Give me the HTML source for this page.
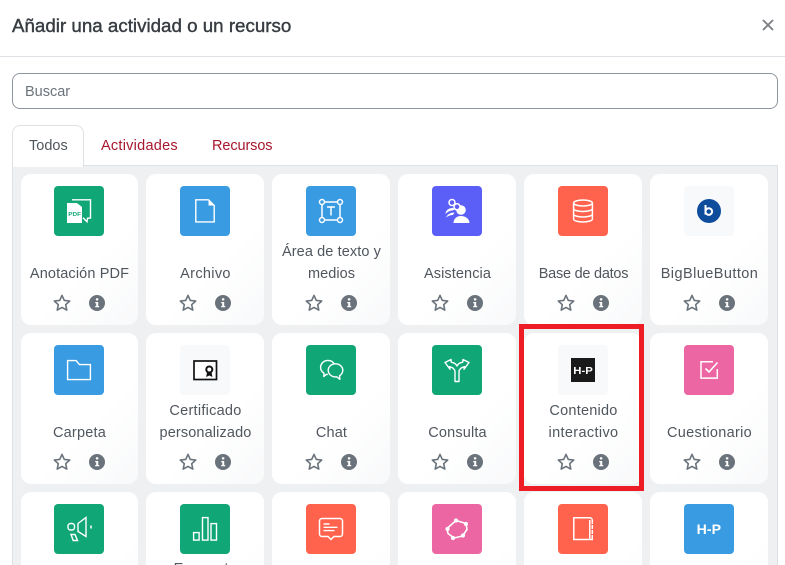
<!DOCTYPE html>
<html lang="es"><head><meta charset="utf-8"><title>Añadir una actividad o un recurso</title>
<style>
html,body{margin:0;padding:0;width:785px;height:565px;overflow:hidden;background:#fff;font-family:"Liberation Sans",sans-serif;color:#495057}
#r{position:relative;width:785px;height:565px;overflow:hidden}
.a{position:absolute}
#t{left:12px;top:14px;font-size:18.75px;font-weight:normal;-webkit-text-stroke:.4px #373c42;line-height:24px;color:#373c42;white-space:nowrap}
#x{left:761px;top:18px}
#hr{left:0;top:56px;width:785px;height:1px;background:#dee2e6}
#s{left:12px;top:73px;width:764px;height:34px;border:1px solid #8f959e;border-radius:8px;font-size:14.5px;line-height:37px;color:#6a737b;text-indent:12px}
#p{left:12px;top:165px;width:766px;height:400px;box-sizing:border-box;border:1px solid #dee2e6;border-bottom:0;background:#eff0f2}
#tab{left:12px;top:125px;width:70px;height:41px;border:1px solid #dee2e6;border-bottom:0;border-radius:8px 8px 0 0;background:#fff}
.tt{top:136px;font-size:14.5px;line-height:20px;white-space:nowrap}
.l{color:#a5182d}
.c{position:absolute;width:118px;height:151px;border-radius:10px;background:linear-gradient(135deg,#fff 60%,#f8f9fa 100%)}
.f{clip-path:inset(0 0 0 1px round 10px)}
.c svg.i{position:absolute;left:34px;top:12px;width:50px;height:50px;border-radius:4px}
.n{position:absolute;left:.5px;width:118px;text-align:center;font-size:14.5px;line-height:21.5px;color:#50565d;white-space:nowrap}
.n.o{top:90px}.n.w{top:68px}
.st{position:absolute;left:33px;top:120px;width:18px;height:18px}
.in{position:absolute;left:69px;top:121px;width:16px;height:16px}
#red{left:519px;top:324px;width:115px;height:157px;border:5px solid #ee1c25}
</style></head><body><div id="r">
<svg width="0" height="0" style="position:absolute"><defs>
<symbol id="star" viewBox="0 0 18 18"><path d="M9 1.4l2.3 5 5.4.6-4 3.700 1.100 5.400L9 13.400l-4.800 2.700 1.100-5.400-4-3.700 5.400-.6z" fill="none" stroke="#6a737b" stroke-width="1.600" stroke-linejoin="round"/></symbol>
<symbol id="info" viewBox="0 0 16 16"><circle cx="8" cy="8" r="8" fill="#6a737b"/><rect x="6.900" y="3.200" width="2.400" height="2.300" rx=".6" fill="#fff"/><path d="M6.200 7h3v4h1v1.300H6.200V11h1V8.200h-1z" fill="#fff"/></symbol>
</defs></svg>

<div class="a" id="t">Añadir una actividad o un recurso</div>
<svg class="a" id="x" width="14" height="14" viewBox="0 0 14 14"><path d="M2 2l10 10M12 2L2 12" stroke="#7d8185" stroke-width="1.900"/></svg>
<div class="a" id="hr"></div>
<div class="a" id="s">Buscar</div>
<div class="a" id="p"></div>
<div class="a" id="tab"></div>
<div class="a tt" style="left:29px;color:#50565d">Todos</div>
<div class="a tt l" style="left:101px;letter-spacing:.25px">Actividades</div>
<div class="a tt l" style="left:212px;letter-spacing:-.1px">Recursos</div>

<!-- Row 1 -->
<div class="c f" style="left:20px;top:174px"><svg class="i" viewBox="0 0 50 50"><rect width="50" height="50" fill="#11a676"/><path d="M18 13.800h18.500v18.200l-3 .3-.5 3.500-4-4" fill="none" stroke="#fff" stroke-width="1.400"/><path d="M13 17h10l5 4v16H13z" fill="#fff"/><text x="14.300" y="29.800" font-size="5.600" font-weight="bold" fill="#11a676" font-family="Liberation Sans" textLength="12.700" lengthAdjust="spacingAndGlyphs">PDF</text></svg><div class="n o" style="letter-spacing:.13px">Anotación PDF</div><svg class="st"><use href="#star"/></svg><svg class="in"><use href="#info"/></svg></div>

<div class="c" style="left:146px;top:174px"><svg class="i" viewBox="0 0 50 50"><rect width="50" height="50" fill="#399be2"/><path d="M15.800 13.800h12.700l5.700 5.700v16.400H15.800z" fill="none" stroke="#fff" stroke-width="1.400"/><path d="M28.500 13.800v5.700h5.700z" fill="#fff"/></svg><div class="n o" style="letter-spacing:.33px">Archivo</div><svg class="st"><use href="#star"/></svg><svg class="in"><use href="#info"/></svg></div>

<div class="c" style="left:272px;top:174px"><svg class="i" viewBox="0 0 50 50"><rect width="50" height="50" fill="#399be2"/><g fill="none" stroke="#fff" stroke-width="1.500"><rect x="16" y="16" width="18" height="18"/><g fill="#399be2"><circle cx="16" cy="16" r="2.500"/><circle cx="34" cy="16" r="2.500"/><circle cx="16" cy="34" r="2.500"/><circle cx="34" cy="34" r="2.500"/></g><path d="M21 21h8M25 21v8.500"/></g></svg><div class="n w"><span style="letter-spacing:.1px">Área de texto y</span><br><span style="letter-spacing:.05px">medios</span></div><svg class="st"><use href="#star"/></svg><svg class="in"><use href="#info"/></svg></div>

<div class="c" style="left:398px;top:174px"><svg class="i" viewBox="0 0 50 50"><rect width="50" height="50" fill="#5b5ff8"/><g fill="#fff"><circle cx="29" cy="24" r="4.800"/><path d="M21.500 37c0-4 3-7 7.500-7s8.500 3 8.500 7z"/><path d="M13.500 28c0-3.500 3-6 7-6l3 1-3 1.500c-2.500 0-4.500 1-7 3.500z"/><path d="M14 31.500c1.500-3.500 5-5 8.500-5l-1.500 2.500c-3 0-5 1-7 2.500z"/></g><g fill="#5b5ff8" stroke="#fff" stroke-width="1.500"><circle cx="20" cy="16.500" r="3"/><circle cx="25" cy="20.800" r="3"/></g></svg><div class="n o" style="letter-spacing:.1px">Asistencia</div><svg class="st"><use href="#star"/></svg><svg class="in"><use href="#info"/></svg></div>

<div class="c" style="left:524px;top:174px"><svg class="i" viewBox="0 0 50 50"><rect width="50" height="50" fill="#ff634d"/><g fill="none" stroke="#fff" stroke-width="1.500"><ellipse cx="25" cy="17" rx="9.400" ry="3"/><path d="M15.600 17v16c0 1.700 4.200 3 9.400 3s9.400-1.300 9.400-3V17M15.600 22.500c0 1.700 4.200 3 9.400 3s9.400-1.300 9.400-3M15.600 28c0 1.700 4.200 3 9.400 3s9.400-1.300 9.400-3"/></g></svg><div class="n o" style="letter-spacing:-.25px">Base de datos</div><svg class="st"><use href="#star"/></svg><svg class="in"><use href="#info"/></svg></div>

<div class="c" style="left:650px;top:174px"><svg class="i" viewBox="0 0 50 50"><rect width="50" height="50" fill="#f8f9fa"/><circle cx="25" cy="25" r="12" fill="#0f4c9c"/><path d="M21.500 19v9.500M21.500 25.500a3.300 3.300 0 1 1 0 .1" fill="none" stroke="#fff" stroke-width="2"/></svg><div class="n o" style="letter-spacing:.44px">BigBlueButton</div><svg class="st"><use href="#star"/></svg><svg class="in"><use href="#info"/></svg></div>

<!-- Row 2 -->
<div class="c f" style="left:20px;top:333px"><svg class="i" viewBox="0 0 50 50"><rect width="50" height="50" fill="#399be2"/><path d="M13.600 15.600h8.500l3.300 4h11v15H13.600z" fill="none" stroke="#fff" stroke-width="1.400"/></svg><div class="n o" style="letter-spacing:.2px">Carpeta</div><svg class="st"><use href="#star"/></svg><svg class="in"><use href="#info"/></svg></div>

<div class="c" style="left:146px;top:333px"><svg class="i" viewBox="0 0 50 50"><rect width="50" height="50" fill="#f8f9fa"/><rect x="14" y="16" width="22.500" height="18.500" fill="#fff" stroke="#111" stroke-width="1.700"/><circle cx="29.300" cy="24.500" r="3" fill="none" stroke="#111" stroke-width="2"/><path d="M27 27.500l-.8 4.500 3.100-1.500 3.100 1.500-.8-4.500z" fill="#111"/></svg><div class="n w"><span style="letter-spacing:.26px">Certificado</span><br><span style="letter-spacing:.13px">personalizado</span></div><svg class="st"><use href="#star"/></svg><svg class="in"><use href="#info"/></svg></div>

<div class="c" style="left:272px;top:333px"><svg class="i" viewBox="0 0 50 50"><rect width="50" height="50" fill="#11a676"/><g fill="none" stroke="#fff" stroke-width="1.400" stroke-linejoin="round"><path d="M21.800 29.500c-.5 0-1-.1-1.500-.2l-2.500 2.200.2-3.300c-2-1.300-3.400-3.400-3.400-5.800 0-3.900 3.300-7 7.300-7 2.800 0 5.300 1.500 6.500 3.800"/><path d="M29.500 18.800c4 0 7.300 2.900 7.300 6.500 0 2.300-1.300 4.300-3.300 5.500l.4 3.500-3.300-2.500c-.4.100-.7.1-1.100.1-4 0-7.300-2.900-7.300-6.600s3.300-6.500 7.300-6.500z"/></g></svg><div class="n o" style="letter-spacing:.15px">Chat</div><svg class="st"><use href="#star"/></svg><svg class="in"><use href="#info"/></svg></div>

<div class="c" style="left:398px;top:333px"><svg class="i" viewBox="0 0 50 50"><rect width="50" height="50" fill="#11a676"/><path d="M23 36.500V27c0-2.500-2-4.500-5.500-5.300l.5 2.500-5-6.700 6-3 .3 2.700c3 .5 4.700 1.800 5.700 3.800 1-2 2.700-3.300 5.700-3.800l.3-2.700 6 3-5 6.700.5-2.500c-3.500.8-5.500 2.800-5.500 5.300v9.500z" fill="none" stroke="#fff" stroke-width="1.400" stroke-linejoin="round"/></svg><div class="n o" style="letter-spacing:.15px">Consulta</div><svg class="st"><use href="#star"/></svg><svg class="in"><use href="#info"/></svg></div>

<div class="c" style="left:524px;top:333px"><svg class="i" viewBox="0 0 50 50"><rect width="50" height="50" fill="#f8f9fa"/><rect x="13" y="13" width="24" height="24" fill="#1a1a1a"/><text x="15.300" y="29" font-size="10.500" font-weight="bold" fill="#fff" font-family="Liberation Sans" textLength="19.500" lengthAdjust="spacingAndGlyphs">H-P</text></svg><div class="n w"><span style="letter-spacing:.23px">Contenido</span><br><span style="letter-spacing:.35px">interactivo</span></div><svg class="st"><use href="#star"/></svg><svg class="in"><use href="#info"/></svg></div>

<div class="c" style="left:650px;top:333px"><svg class="i" viewBox="0 0 50 50"><rect width="50" height="50" fill="#eb66a2"/><path d="M29 16.800H17v16.300h16.300V24" fill="none" stroke="#fff" stroke-width="1.500"/><path d="M21.500 23.500l3.500 3.500 8.500-9.500" fill="none" stroke="#fff" stroke-width="1.600"/></svg><div class="n o" style="letter-spacing:.3px">Cuestionario</div><svg class="st"><use href="#star"/></svg><svg class="in"><use href="#info"/></svg></div>

<!-- Row 3 -->
<div class="c f" style="left:20px;top:492px"><svg class="i" viewBox="0 0 50 50"><rect width="50" height="50" fill="#11a676"/><g fill="none" stroke="#fff" stroke-width="1.400"><rect x="14" y="19.500" width="6.500" height="6.500" rx="2.500"/><path d="M24 19.500l8-6v19l-8-5z"/><path d="M17 30.500h4l2.500 6h-4.300z"/><path d="M37 21.500v3" stroke-width="1.500"/></g></svg></div>

<div class="c" style="left:146px;top:492px"><svg class="i" viewBox="0 0 50 50"><rect width="50" height="50" fill="#11a676"/><g fill="none" stroke="#fff" stroke-width="1.400"><rect x="13.600" y="28.600" width="5.500" height="7.500"/><rect x="22.500" y="13.600" width="5.500" height="22.500"/><rect x="31" y="19.600" width="5.500" height="16.500"/></g></svg><div class="n" style="top:66.500px;letter-spacing:.4px">Encuesta</div></div>

<div class="c" style="left:272px;top:492px"><svg class="i" viewBox="0 0 50 50"><rect width="50" height="50" fill="#ff634d"/><path d="M16 14.500h18a2.500 2.500 0 0 1 2.500 2.500v13a2.500 2.500 0 0 1-2.500 2.500h-6l-3 3-3-3h-6a2.500 2.500 0 0 1-2.500-2.500V17a2.500 2.500 0 0 1 2.500-2.500z" fill="none" stroke="#fff" stroke-width="1.500"/><path d="M17.500 20h6M17.500 23.300h14M17.500 26.600h11" stroke="#fff" stroke-width="1.400"/></svg></div>

<div class="c" style="left:398px;top:492px"><svg class="i" viewBox="0 0 50 50"><rect width="50" height="50" fill="#eb66a2"/><path d="M24 16.500l10 3 1 6-4.500 6.500-8.500 2-6-4.500-1-5z" fill="none" stroke="#fff" stroke-width="1.600" stroke-linejoin="round"/><g fill="#fff"><circle cx="24" cy="16.500" r="2.100"/><circle cx="34" cy="20" r="2.100"/><circle cx="31" cy="31.500" r="2.100"/><circle cx="21" cy="34" r="2.100"/><circle cx="15.500" cy="25" r="2.100"/></g></svg></div>

<div class="c" style="left:524px;top:492px"><svg class="i" viewBox="0 0 50 50"><rect width="50" height="50" fill="#ff634d"/><path d="M15.800 13.800h16a2.500 2.500 0 0 1 2.500 2.500v19.200H15.800z" fill="none" stroke="#fff" stroke-width="1.500"/><path d="M31.800 16v19" stroke="#fff" stroke-width="1.500"/><path d="M33 20.500h3M33 25.500h3M33 30.500h3" stroke="#ff634d" stroke-width="1"/></svg></div>

<div class="c" style="left:650px;top:492px"><svg class="i" viewBox="0 0 50 50"><rect width="50" height="50" fill="#399be2"/><text x="12.700" y="30" font-size="14" font-weight="bold" fill="#fff" font-family="Liberation Sans" textLength="24.300" lengthAdjust="spacingAndGlyphs">H-P</text></svg></div>

<div class="a" id="red"></div>
</div></body></html>
